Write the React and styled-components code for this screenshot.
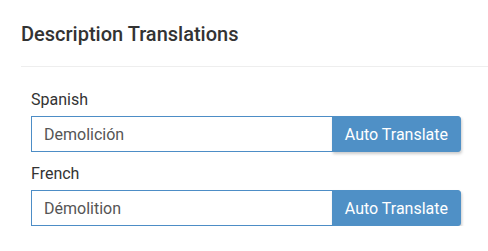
import React from "react";
import styled, { createGlobalStyle } from "styled-components";

const GlobalStyle = createGlobalStyle`
  html, body { margin: 0; padding: 0; background: #fff; }
  body { font-family: Roboto, "Noto Sans", sans-serif; color: #333; }
`;

const Panel = styled.section`
  padding: 21px 0 0 21px;
`;

const Title = styled.h3`
  margin: 0;
  padding: 2px 0 0;
  font-size: 20px;
  line-height: 22px;
  font-weight: 500;
  color: #333;
`;

const Divider = styled.hr`
  margin: 21px 0 0;
  border: 0;
  border-top: 1px solid #eeeeee;
`;

const Body = styled.div`
  padding: 22px 27px 0 10px;
  display: flex;
  flex-direction: column;
  gap: 11px;
`;

const Group = styled.div`
  display: flex;
  flex-direction: column;
  gap: 5px;
`;

const Label = styled.label`
  font-size: 16px;
  line-height: 22px;
  color: #333;
`;

const Row = styled.div`
  display: flex;
  height: 36px;
`;

const Input = styled.input`
  flex: 1;
  min-width: 0;
  box-sizing: border-box;
  height: 36px;
  margin: 0;
  padding: 0 12px;
  border: 1px solid #4d8dc6;
  border-radius: 0;
  font-family: Roboto, sans-serif;
  font-size: 16px;
  color: #555;
  outline: none;
  background: #fff;
`;

const Button = styled.button`
  box-sizing: border-box;
  height: 36px;
  margin: 0 0 0 -1px;
  padding: 0 12px;
  border: 1px solid #4f90c6;
  border-radius: 0 3px 3px 0;
  background: #4f90c6;
  color: #fff;
  font-family: Roboto, sans-serif;
  font-size: 16px;
  white-space: nowrap;
  box-shadow: 1px 2px 3px rgba(0, 0, 0, 0.2);
  cursor: pointer;
`;

const fields = [
  { label: "Spanish", value: "Demolición" },
  { label: "French", value: "Démolition" },
];

export default function App() {
  return (
    <>
      <GlobalStyle />
      <Panel>
        <Title>Description Translations</Title>
        <Divider />
        <Body>
          {fields.map((f) => (
            <Group key={f.label}>
              <Label>{f.label}</Label>
              <Row>
                <Input defaultValue={f.value} />
                <Button>Auto Translate</Button>
              </Row>
            </Group>
          ))}
        </Body>
      </Panel>
    </>
  );
}
